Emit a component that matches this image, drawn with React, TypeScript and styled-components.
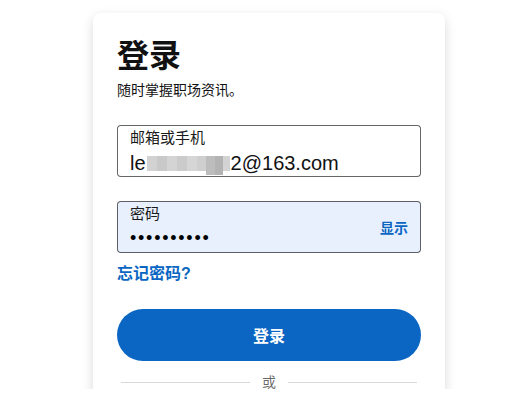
import React from "react";
import styled, { createGlobalStyle } from "styled-components";

const GlobalStyle = createGlobalStyle`
  html, body {
    margin: 0;
    padding: 0;
    background: #ffffff;
  }
  body {
    font-family: "Liberation Sans", "Noto Sans CJK SC", sans-serif;
  }
`;

const CJK = `"Liberation Sans", "Noto Sans CJK SC", sans-serif`;
const BLUE = "#0a66c2";

const Stage = styled.div`
  height: 389px;
  overflow: hidden;
  padding-top: 13px;
  box-sizing: border-box;
`;

const Card = styled.main`
  margin-left: 93px;
  width: 352px;
  min-height: 420px;
  box-sizing: border-box;
  padding: 23px 24px 0;
  background: #ffffff;
  border-radius: 8px;
  box-shadow: 0 4px 12px rgba(0, 0, 0, 0.15);
  display: flex;
  flex-direction: column;
`;

const Title = styled.h1`
  margin: 0;
  font-family: ${CJK};
  font-size: 32px;
  line-height: 40px;
  font-weight: 700;
  color: #111111;
`;

const Subtitle = styled.p`
  margin: 4px 0 0;
  font-family: ${CJK};
  font-size: 14px;
  line-height: 20px;
  color: #111111;
`;

const Form = styled.form`
  margin-top: 25px;
  display: flex;
  flex-direction: column;
`;

const Field = styled.div<{ $filled?: boolean; $gap?: number }>`
  height: 52px;
  box-sizing: border-box;
  margin-top: ${(p) => p.$gap ?? 0}px;
  border: 1px solid rgba(0, 0, 0, 0.6);
  border-radius: 4px;
  background: ${(p) => (p.$filled ? "#e8f0fe" : "#ffffff")};
  padding: 2px 12px 0;
  display: flex;
  align-items: center;
`;

const FieldBody = styled.div`
  flex: 1;
  display: flex;
  flex-direction: column;
  align-self: stretch;
`;

const Label = styled.label`
  font-family: ${CJK};
  font-size: 15px;
  line-height: 20px;
  color: #1a1a1a;
`;

const Value = styled.div`
  margin-top: 3px;
  font-family: ${CJK};
  font-size: 20px;
  line-height: 24px;
  color: #111111;
  white-space: nowrap;
  display: flex;
  align-items: baseline;
`;

const Mosaic = styled.span`
  display: inline-flex;
  align-self: flex-start;
  align-items: flex-start;
  height: 16px;
  margin: 5px 1px 0 1px;
`;

const Tile = styled.span<{ $shade: string; $w: number; $drop?: number }>`
  width: ${(p) => p.$w}px;
  height: ${(p) => 15 + (p.$drop ?? 0)}px;
  background: ${(p) => p.$shade};
`;

const Dots = styled.div`
  margin-top: 4px;
  font-family: "Liberation Sans", sans-serif;
  font-size: 18px;
  line-height: 20px;
  letter-spacing: 1.75px;
  color: #000000;
  white-space: nowrap;
`;

const ShowToggle = styled.button`
  border: 0;
  padding: 0;
  background: transparent;
  font-family: ${CJK};
  font-size: 14px;
  line-height: 20px;
  font-weight: 700;
  color: ${BLUE};
  cursor: pointer;
`;

const Forgot = styled.a`
  margin-top: 9px;
  align-self: flex-start;
  font-family: ${CJK};
  font-size: 16px;
  line-height: 24px;
  font-weight: 700;
  color: ${BLUE};
  text-decoration: none;
`;

const Submit = styled.button`
  margin-top: 23px;
  height: 52px;
  border: 0;
  border-radius: 26px;
  background: ${BLUE};
  color: #ffffff;
  font-family: ${CJK};
  font-size: 16px;
  font-weight: 700;
  cursor: pointer;
`;

const Divider = styled.div`
  margin: 11px 4px 0;
  display: flex;
  align-items: center;
  gap: 12px;
`;

const Rule = styled.span`
  flex: 1;
  height: 1px;
  background: #d9d9d9;
`;

const Or = styled.span`
  font-family: ${CJK};
  font-size: 14px;
  line-height: 20px;
  color: rgba(0, 0, 0, 0.6);
`;

const tiles: { shade: string; w: number; drop?: number }[] = [
  { shade: "#d2d2d2", w: 10 },
  { shade: "#c9c9c9", w: 10 },
  { shade: "#d4d4d4", w: 10 },
  { shade: "#cbcbcb", w: 10 },
  { shade: "#d6d6d6", w: 10 },
  { shade: "#cfcfcf", w: 9 },
  { shade: "#bdbdbd", w: 9, drop: 4 },
  { shade: "#b3b3b3", w: 8, drop: 4 },
  { shade: "#d3d3d3", w: 7 },
];

export default function App() {
  return (
    <>
      <GlobalStyle />
      <Stage>
        <Card>
          <Title>登录</Title>
          <Subtitle>随时掌握职场资讯。</Subtitle>
          <Form onSubmit={(e) => e.preventDefault()}>
            <Field>
              <FieldBody>
                <Label>邮箱或手机</Label>
                <Value>
                  le
                  <Mosaic>
                    {tiles.map((t, i) => (
                      <Tile key={i} $shade={t.shade} $w={t.w} $drop={t.drop} />
                    ))}
                  </Mosaic>
                  2@163.com
                </Value>
              </FieldBody>
            </Field>
            <Field $filled $gap={24}>
              <FieldBody>
                <Label>密码</Label>
                <Dots>••••••••••</Dots>
              </FieldBody>
              <ShowToggle type="button">显示</ShowToggle>
            </Field>
            <Forgot href="#">忘记密码?</Forgot>
            <Submit type="submit">登录</Submit>
            <Divider>
              <Rule />
              <Or>或</Or>
              <Rule />
            </Divider>
          </Form>
        </Card>
      </Stage>
    </>
  );
}
